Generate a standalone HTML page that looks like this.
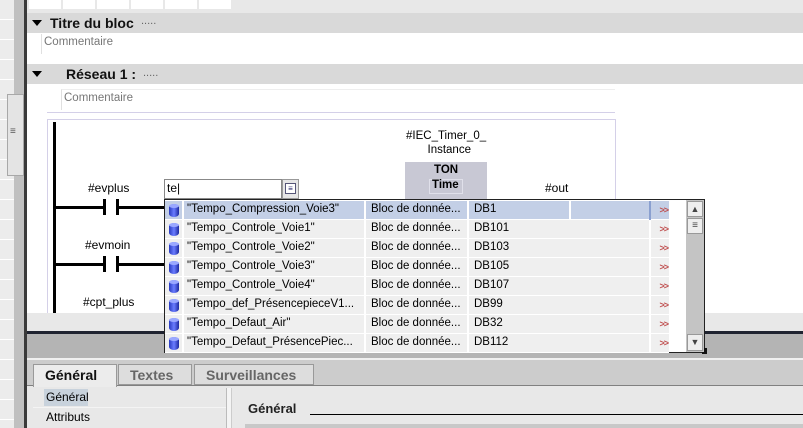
<!DOCTYPE html>
<html><head><meta charset="utf-8"><style>
*{margin:0;padding:0;box-sizing:border-box}
body{width:803px;height:428px;overflow:hidden;position:relative;background:#fff;font-family:"Liberation Sans",sans-serif;font-size:12px;color:#000}
.a{position:absolute}
.t{position:absolute;white-space:nowrap}
.row{position:absolute;left:165px;width:504px;height:19px;background:#efefef;border-bottom:1px solid #fff}
.row span{position:absolute;top:2px;font-size:11.5px;white-space:nowrap}
.cyl{position:absolute;left:4px;top:3px;width:10px;height:13px;border-radius:5px/3px;background:linear-gradient(90deg,#2a3cc0,#6a7cff 50%,#1d2aa0)}
.cyl:before{content:"";position:absolute;left:0;top:0;width:10px;height:4px;border-radius:50%;background:#9aa8ff}
.vs{position:absolute;top:0;width:2px;height:19px;background:#fff}
.gg{position:absolute;right:1px;top:4px;font-size:9px;color:#c05050;letter-spacing:-1px}
.tri{position:absolute;width:0;height:0;border-left:5px solid transparent;border-right:5px solid transparent;border-top:6px solid #000}
</style></head><body>
<div class="a" style="left:0;top:0;width:14px;height:428px;background:repeating-linear-gradient(#ececec 0 19px,#fff 19px 20px)"></div>
<div class="a" style="left:14px;top:0;width:10px;height:428px;background:#c0c0c0"></div>
<div class="a" style="left:7px;top:94px;width:17px;height:82px;background:#e4e4e4;border:1px solid #a8a8a8"></div>
<div class="t" style="left:10px;top:126px;font-size:10px;color:#555">≡</div>
<div class="a" style="left:24px;top:0;width:3px;height:428px;background:#3a3a3a"></div>
<div class="a" style="left:27px;top:0;width:776px;height:13px;background:#e8e8e8"></div>
<div class="a" style="left:29px;top:0;width:32px;height:9px;background:#fff"></div>
<div class="a" style="left:63px;top:0;width:32px;height:9px;background:#fff"></div>
<div class="a" style="left:97px;top:0;width:32px;height:9px;background:#fff"></div>
<div class="a" style="left:131px;top:0;width:32px;height:9px;background:#fff"></div>
<div class="a" style="left:165px;top:0;width:32px;height:9px;background:#fff"></div>
<div class="a" style="left:199px;top:0;width:32px;height:9px;background:#fff"></div>
<div class="a" style="left:27px;top:13px;width:776px;height:20px;background:#d9d9d9"></div>
<i class="tri" style="left:32px;top:20px"></i>
<div class="t" style="left:50px;top:15px;font-size:14px;font-weight:bold;color:#111">Titre du bloc</div>
<div class="t" style="left:141px;top:15px;font-size:11px;color:#666">.....</div>
<div class="a" style="left:41px;top:34px;width:1px;height:20px;background:#e0e0e0"></div>
<div class="t" style="left:44px;top:36px;font-size:11.5px;color:#777">Commentaire</div>
<div class="a" style="left:27px;top:64px;width:776px;height:20px;background:#d9d9d9"></div>
<i class="tri" style="left:32px;top:71px"></i>
<div class="t" style="left:66px;top:66px;font-size:14px;font-weight:bold;color:#111">Réseau 1 :</div>
<div class="t" style="left:143px;top:67px;font-size:11px;color:#666">.....</div>
<div class="a" style="left:61px;top:89px;width:554px;height:21px;border-left:1px solid #e0e0e0;border-top:1px solid #eee"></div>
<div class="t" style="left:64px;top:92px;font-size:11.5px;color:#777">Commentaire</div>
<div class="a" style="left:47px;top:112px;width:568px;height:1px;background:#d4d0e8"></div>
<div class="a" style="left:47px;top:119px;width:569px;height:200px;border:1px solid #d4d0e8;border-bottom:none"></div>
<div class="a" style="left:53px;top:122px;width:3px;height:191px;background:#000"></div>
<div class="t" style="left:88px;top:181px;font-size:12px">#evplus</div>
<div class="a" style="left:53px;top:206px;width:50px;height:3px;background:#000"></div>
<div class="a" style="left:103px;top:199px;width:3px;height:16px;background:#000"></div>
<div class="a" style="left:116px;top:199px;width:3px;height:16px;background:#000"></div>
<div class="a" style="left:116px;top:206px;width:50px;height:3px;background:#000"></div>
<div class="t" style="left:85px;top:238px;font-size:12px">#evmoin</div>
<div class="a" style="left:53px;top:263px;width:50px;height:3px;background:#000"></div>
<div class="a" style="left:103px;top:256px;width:3px;height:16px;background:#000"></div>
<div class="a" style="left:116px;top:256px;width:3px;height:16px;background:#000"></div>
<div class="a" style="left:116px;top:263px;width:50px;height:3px;background:#000"></div>
<div class="t" style="left:83px;top:295px;font-size:12px">#cpt_plus</div>
<div class="t" style="left:406px;top:129px;font-size:11.5px;text-align:center;line-height:14px">#IEC_Timer_0_<br>&nbsp;&nbsp;Instance</div>
<div class="a" style="left:405px;top:162px;width:82px;height:40px;background:#c8c8d4"></div>
<div class="t" style="left:434px;top:164px;font-size:11.5px;font-weight:bold">TON</div>
<div class="a" style="left:429px;top:179px;width:34px;height:15px;border:1px solid #e0e0ea"></div>
<div class="t" style="left:432px;top:179px;font-size:11.5px;font-weight:bold">Time</div>
<div class="t" style="left:545px;top:181px;font-size:12px">#out</div>
<div class="a" style="left:164px;top:179px;width:118px;height:20px;background:#fff;border:1px solid #888"></div>
<div class="t" style="left:167px;top:181px;font-size:12px">te<span style="font-weight:100">|</span></div>
<div class="a" style="left:282px;top:179px;width:17px;height:20px;background:#e6e6e6;border:1px solid #999"></div>
<div class="a" style="left:285px;top:183px;width:11px;height:11px;background:#fff;border:1px solid #557;font-size:8px;line-height:9px;text-align:center;color:#226">≡</div>
<div class="a" style="left:27px;top:313px;width:776px;height:18px;background:#e8e8e8"></div>
<div class="a" style="left:27px;top:331px;width:776px;height:3px;background:#1f2330"></div>
<div class="a" style="left:27px;top:334px;width:776px;height:24px;background:#b4b4b4"></div>
<div class="a" style="left:27px;top:358px;width:776px;height:2px;background:#f0f0f0"></div>
<div class="a" style="left:27px;top:360px;width:776px;height:26px;background:#cccccc"></div>
<div class="a" style="left:27px;top:385px;width:776px;height:1px;background:#808080"></div>
<div class="a" style="left:27px;top:386px;width:776px;height:42px;background:#e8e8e8"></div>
<div class="a" style="left:33px;top:364px;width:84px;height:23px;background:#ececec;border:1px solid #999;border-bottom:none"></div>
<div class="t" style="left:45px;top:367px;font-size:14px;font-weight:bold;color:#111">Général</div>
<div class="a" style="left:118px;top:364px;width:74px;height:21px;background:#ddd;border:1px solid #999"></div>
<div class="t" style="left:130px;top:367px;font-size:14px;font-weight:bold;color:#666">Textes</div>
<div class="a" style="left:194px;top:364px;width:120px;height:21px;background:#ddd;border:1px solid #999"></div>
<div class="t" style="left:206px;top:367px;font-size:14px;font-weight:bold;color:#666">Surveillances</div>
<div class="a" style="left:44px;top:389px;width:44px;height:17px;background:#c8d2dc"></div>
<div class="t" style="left:46px;top:390px;font-size:12px">Général</div>
<div class="a" style="left:33px;top:407px;width:193px;height:1px;background:#f4f4f4"></div>
<div class="t" style="left:46px;top:410px;font-size:12px">Attributs</div>
<div class="a" style="left:226px;top:388px;width:6px;height:40px;background:#f4f4f4;border-left:1px solid #bbb;border-right:1px solid #ccc"></div>
<div class="t" style="left:248px;top:401px;font-size:13px;font-weight:bold;color:#222">Général</div>
<div class="a" style="left:310px;top:414px;width:493px;height:1px;background:#000"></div>
<div class="a" style="left:245px;top:424px;width:558px;height:4px;background:#c8c8c8"></div>
<div class="a" style="left:164px;top:199px;width:541px;height:154px;background:#fff;border:1px solid #222"></div>
<div class="a" style="left:702px;top:348px;width:5px;height:6px;background:#111"></div>
<div class="a" style="left:686px;top:200px;width:18px;height:152px;background:#c4c4c4"></div>
<div class="a" style="left:687px;top:201px;width:16px;height:16px;background:#eee;border:1px solid #999;font-size:9px;text-align:center;line-height:14px;color:#444">▲</div>
<div class="a" style="left:687px;top:218px;width:16px;height:16px;background:#eee;border:1px solid #999;font-size:10px;text-align:center;line-height:14px;color:#444">≡</div>
<div class="a" style="left:687px;top:334px;width:16px;height:17px;background:#eee;border:1px solid #999;font-size:9px;text-align:center;line-height:15px;color:#444">▼</div>
<div class="row" style="top:201px;background:#c3cfe6"><i class="cyl"></i><span style="left:22px">"Tempo_Compression_Voie3"</span><span style="left:206px">Bloc de donnée...</span><span style="left:309px">DB1</span><i class="vs" style="left:17px"></i><i class="vs" style="left:199px"></i><i class="vs" style="left:302px"></i><i class="vs" style="left:404px"></i><i class="vs" style="left:484px;background:#8aa0d0"></i><b class="gg">&gt;&gt;</b></div>
<div class="row" style="top:220px"><i class="cyl"></i><span style="left:22px">"Tempo_Controle_Voie1"</span><span style="left:206px">Bloc de donnée...</span><span style="left:309px">DB101</span><i class="vs" style="left:17px"></i><i class="vs" style="left:199px"></i><i class="vs" style="left:302px"></i><i class="vs" style="left:484px"></i><b class="gg">&gt;&gt;</b></div>
<div class="row" style="top:239px"><i class="cyl"></i><span style="left:22px">"Tempo_Controle_Voie2"</span><span style="left:206px">Bloc de donnée...</span><span style="left:309px">DB103</span><i class="vs" style="left:17px"></i><i class="vs" style="left:199px"></i><i class="vs" style="left:302px"></i><i class="vs" style="left:484px"></i><b class="gg">&gt;&gt;</b></div>
<div class="row" style="top:258px"><i class="cyl"></i><span style="left:22px">"Tempo_Controle_Voie3"</span><span style="left:206px">Bloc de donnée...</span><span style="left:309px">DB105</span><i class="vs" style="left:17px"></i><i class="vs" style="left:199px"></i><i class="vs" style="left:302px"></i><i class="vs" style="left:484px"></i><b class="gg">&gt;&gt;</b></div>
<div class="row" style="top:277px"><i class="cyl"></i><span style="left:22px">"Tempo_Controle_Voie4"</span><span style="left:206px">Bloc de donnée...</span><span style="left:309px">DB107</span><i class="vs" style="left:17px"></i><i class="vs" style="left:199px"></i><i class="vs" style="left:302px"></i><i class="vs" style="left:484px"></i><b class="gg">&gt;&gt;</b></div>
<div class="row" style="top:296px"><i class="cyl"></i><span style="left:22px">"Tempo_def_PrésencepieceV1...</span><span style="left:206px">Bloc de donnée...</span><span style="left:309px">DB99</span><i class="vs" style="left:17px"></i><i class="vs" style="left:199px"></i><i class="vs" style="left:302px"></i><i class="vs" style="left:484px"></i><b class="gg">&gt;&gt;</b></div>
<div class="row" style="top:315px"><i class="cyl"></i><span style="left:22px">"Tempo_Defaut_Air"</span><span style="left:206px">Bloc de donnée...</span><span style="left:309px">DB32</span><i class="vs" style="left:17px"></i><i class="vs" style="left:199px"></i><i class="vs" style="left:302px"></i><i class="vs" style="left:484px"></i><b class="gg">&gt;&gt;</b></div>
<div class="row" style="top:334px"><i class="cyl"></i><span style="left:22px">"Tempo_Defaut_PrésencePiec...</span><span style="left:206px">Bloc de donnée...</span><span style="left:309px">DB112</span><i class="vs" style="left:17px"></i><i class="vs" style="left:199px"></i><i class="vs" style="left:302px"></i><i class="vs" style="left:484px"></i><b class="gg">&gt;&gt;</b></div>
</body></html>
